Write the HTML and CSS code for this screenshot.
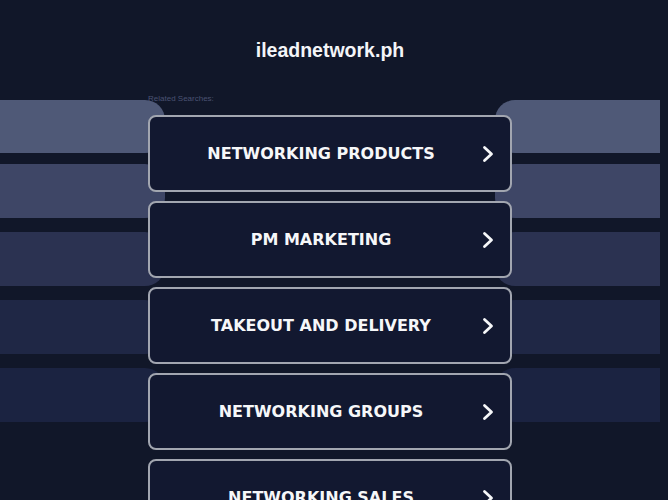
FILE: index.html
```html
<!DOCTYPE html>
<html lang="en">
<head>
    <meta charset="UTF-8">
    <meta name="viewport" content="width=device-width, initial-scale=1.0">
    <title>ileadnetwork.ph</title>
    <link rel="stylesheet" href="styles.css">
</head>
<body>

<div class="header">
    <h1 class="domain">ileadnetwork.ph</h1>
</div>

<div class="stack">
    <div class="bands">
        <div class="band b1"><span class="side left"></span><span class="side right"></span></div>
        <div class="band b2"><span class="side left"></span><span class="side right"></span></div>
        <div class="band b3"><span class="side left"></span><span class="side right"></span></div>
        <div class="band b4"><span class="side left"></span><span class="side right"></span></div>
        <div class="band b5"><span class="side left"></span><span class="side right"></span></div>
    </div>

    <div class="list">
        <div class="related">Related Searches:</div>

        <a class="item" href="#"><span class="label">NETWORKING PRODUCTS</span><svg class="chev" viewBox="0 0 12 18"><path d="M2.5 2.5 L9.5 9 L2.5 15.5"/></svg></a>
        <a class="item" href="#"><span class="label">PM MARKETING</span><svg class="chev" viewBox="0 0 12 18"><path d="M2.5 2.5 L9.5 9 L2.5 15.5"/></svg></a>
        <a class="item" href="#"><span class="label">TAKEOUT AND DELIVERY</span><svg class="chev" viewBox="0 0 12 18"><path d="M2.5 2.5 L9.5 9 L2.5 15.5"/></svg></a>
        <a class="item" href="#"><span class="label">NETWORKING GROUPS</span><svg class="chev" viewBox="0 0 12 18"><path d="M2.5 2.5 L9.5 9 L2.5 15.5"/></svg></a>
        <a class="item" href="#"><span class="label">NETWORKING SALES</span><svg class="chev" viewBox="0 0 12 18"><path d="M2.5 2.5 L9.5 9 L2.5 15.5"/></svg></a>
    </div>
</div>

</body>
</html>
```

FILE: styles.css
```css
body {
    margin: 0;
    background-color: #111729;
    color: white;
    font-family: "Liberation Sans", Arial, sans-serif;
    overflow: hidden;
}
.header {
    width: 660px;
    height: 94px;
    padding-top: 38px;
    box-sizing: border-box;
    text-align: center;
}
.domain {
    margin: 0;
    font-size: 19.5px;
    line-height: 24px;
    font-weight: bold;
    color: #f4f5f8;
}
.stack {
    display: grid;
    width: 660px;
}
.bands, .list {
    grid-area: 1 / 1;
}
.bands {
    padding-top: 6px;
}
.band {
    display: flex;
    justify-content: space-between;
    height: 54px;
    margin-top: 14px;
}
.band.b1 {
    margin-top: 0;
    height: 53px;
}
.band.b2 {
    margin-top: 11px;
}
.side {
    width: 165px;
}
.side.left {
    border-radius: 0 20px 20px 0;
}
.side.right {
    border-radius: 20px 0 0 20px;
}
.b1 .side { background-color: #4f5977; }
.b2 .side { background-color: #3e4666; }
.b3 .side { background-color: #2b3251; }
.b4 .side { background-color: #1f2745; }
.b5 .side { background-color: #1b2341; }

.list {
    position: relative;
    margin-left: 148px;
    width: 364px;
}
.related {
    font-size: 8px;
    line-height: 10px;
    color: #4a5272;
    margin-bottom: 11px;
}
.item {
    display: flex;
    align-items: center;
    height: 77px;
    box-sizing: border-box;
    margin-bottom: 9px;
    padding: 0 16px 0 20px;
    background-color: #121830;
    border: 2px solid #a2a6b0;
    border-radius: 8px;
    text-decoration: none;
    color: #f6f7f9;
}
.label {
    flex: 1;
    text-align: center;
    font-family: "DejaVu Sans", Verdana, sans-serif;
    font-weight: bold;
    font-size: 16px;
    margin-right: 10px;
}
.chev {
    width: 12px;
    height: 18px;
    fill: none;
    stroke: #f6f7f9;
    stroke-width: 2.8;
    stroke-linecap: round;
    stroke-linejoin: round;
}
```
